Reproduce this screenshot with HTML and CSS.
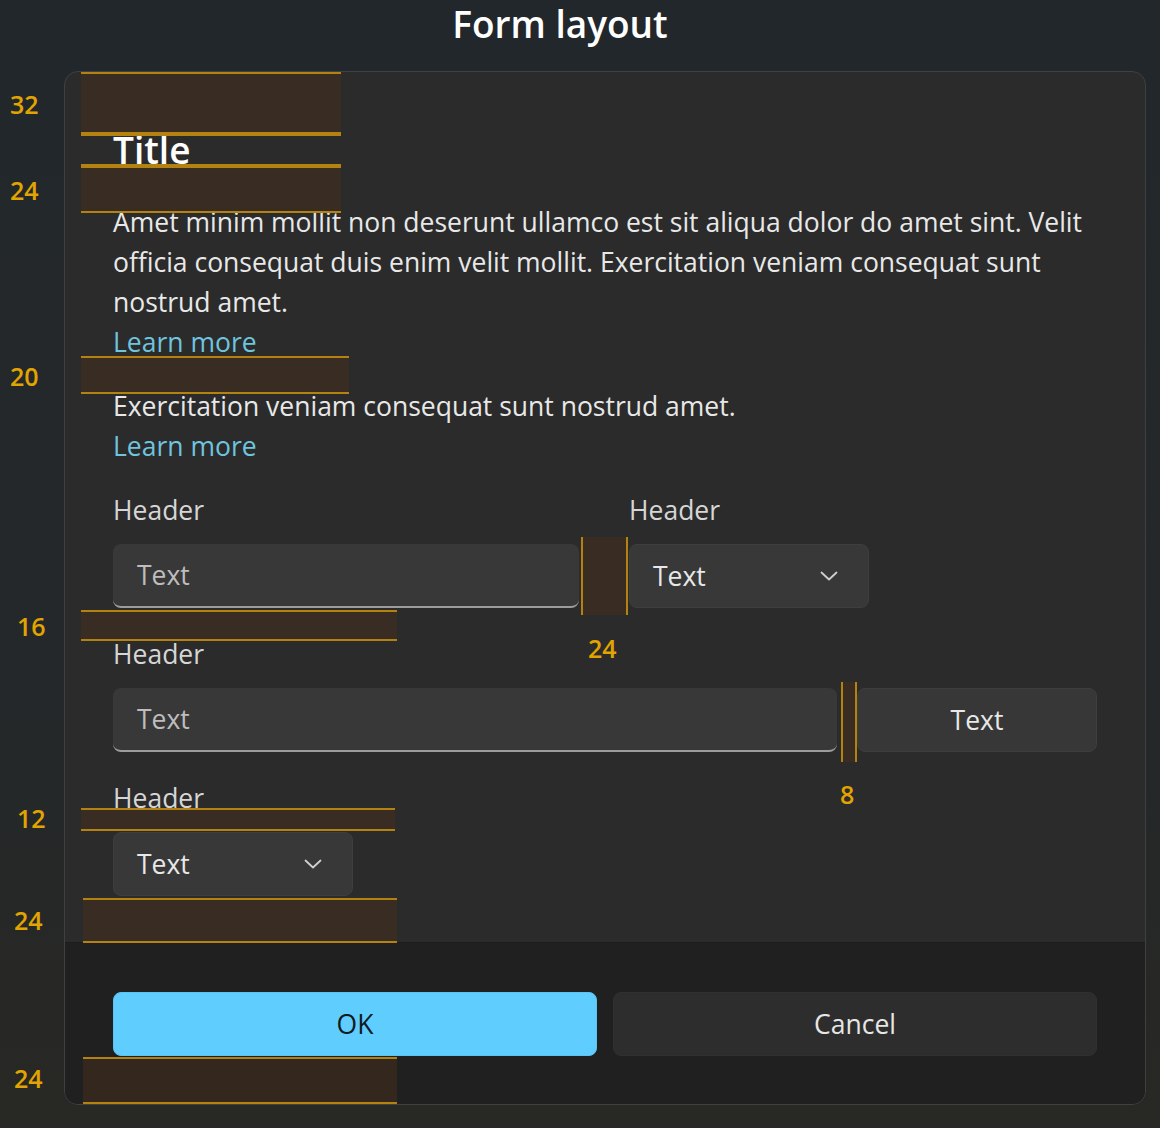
FILE: index.html
```html
<!DOCTYPE html>
<html lang="en">
<head>
<meta charset="utf-8">
<title>Form layout</title>
<link rel="stylesheet" href="styles.css">
</head>
<body>
<div class="page">
  <h1 class="page-title">Form layout</h1>
  <div class="dialog">
    <div class="dialog-body">
      <h2 class="dialog-title">Title</h2>
      <div class="para">
        <p>Amet minim mollit non deserunt ullamco est sit aliqua dolor do amet sint. Velit officia consequat duis enim velit mollit. Exercitation veniam consequat sunt nostrud amet.</p>
        <a class="link" href="#">Learn more</a>
      </div>
      <div class="para second">
        <p>Exercitation veniam consequat sunt nostrud amet.</p>
        <a class="link" href="#">Learn more</a>
      </div>
      <div class="row row-1">
        <div class="field field-wide">
          <div class="label">Header</div>
          <div class="textbox">Text</div>
        </div>
        <div class="field">
          <div class="label">Header</div>
          <div class="combo"><span>Text</span>
            <svg class="chev" width="18" height="10" viewBox="0 0 18 10"><path d="M1.5 1.5 L9 8.5 L16.5 1.5" fill="none" stroke="#cfcfcf" stroke-width="1.8" stroke-linecap="round" stroke-linejoin="round"/></svg>
          </div>
        </div>
      </div>
      <div class="field">
        <div class="label">Header</div>
        <div class="row row-2">
          <div class="textbox grow">Text</div>
          <div class="btn-secondary">Text</div>
        </div>
      </div>
      <div class="field last">
        <div class="label">Header</div>
        <div class="combo"><span>Text</span>
          <svg class="chev" width="18" height="10" viewBox="0 0 18 10"><path d="M1.5 1.5 L9 8.5 L16.5 1.5" fill="none" stroke="#cfcfcf" stroke-width="1.8" stroke-linecap="round" stroke-linejoin="round"/></svg>
        </div>
      </div>
    </div>
    <div class="dialog-footer">
      <button class="btn btn-primary">OK</button>
      <button class="btn btn-cancel">Cancel</button>
    </div>
  </div>

  <!-- redline overlays -->
  <div class="band band-h" style="left:81px;top:72px;width:260px;height:62px"></div>
  <div class="band band-lines" style="left:81px;top:134px;width:260px;height:32px"></div>
  <div class="band band-h" style="left:81px;top:166px;width:260px;height:47px"></div>
  <div class="band band-h" style="left:81px;top:356px;width:268px;height:38px"></div>
  <div class="band band-v" style="left:581px;top:537px;width:47px;height:78px"></div>
  <div class="band band-h" style="left:81px;top:610px;width:316px;height:31px"></div>
  <div class="band band-v" style="left:841px;top:682px;width:16px;height:80px"></div>
  <div class="band band-h" style="left:81px;top:808px;width:314px;height:23px"></div>
  <div class="band band-h" style="left:83px;top:898px;width:314px;height:45px"></div>
  <div class="band band-h" style="left:83px;top:1057px;width:314px;height:47px"></div>

  <span class="num" style="left:10px;top:88px">32</span>
  <span class="num" style="left:10px;top:174px">24</span>
  <span class="num" style="left:10px;top:360px">20</span>
  <span class="num" style="left:17px;top:610px">16</span>
  <span class="num" style="left:588px;top:632px">24</span>
  <span class="num" style="left:840px;top:778px">8</span>
  <span class="num" style="left:17px;top:802px">12</span>
  <span class="num" style="left:14px;top:904px">24</span>
  <span class="num" style="left:14px;top:1062px">24</span>
</div>
</body>
</html>
```

FILE: styles.css
```css
* { box-sizing: border-box; }
html, body { margin: 0; padding: 0; }
body {
  background: linear-gradient(180deg, #22272b 0%, #24282a 60%, #282824 100%);
  font-family: "Open Sans", "Noto Sans", sans-serif;
  color: #ffffff;
  height: 1128px;
  overflow: hidden;
}
.page {
  position: relative;
  width: 1160px;
  height: 1128px;
}
.page-title {
  margin: 0;
  height: 71px;
  padding-right: 40px;
  text-align: center;
  font-size: 37px;
  font-weight: 600;
  line-height: 48px;
  color: #ffffff;
}
.dialog {
  margin-left: 64px;
  width: 1082px;
  border: 1px solid #3f4042;
  border-radius: 14px;
  background: #2b2b2b;
  overflow: hidden;
}
.dialog-body {
  padding: 54px 48px 46px 48px;
}
.dialog-title {
  margin: 0;
  font-size: 37px;
  font-weight: 600;
  line-height: 48px;
  color: #ffffff;
}
.para {
  margin-top: 28px;
  font-size: 26.5px;
  line-height: 40px;
  color: #e8e8e8;
}
.para p { margin: 0; }
.para.second { margin-top: 24px; }
.link {
  color: #6fc4df;
  text-decoration: none;
}
.row { display: flex; }
.row-1 { gap: 50px; margin-top: 24px; }
.row-2 { gap: 20px; }
.field { display: flex; flex-direction: column; margin-top: 26px; }
.row-1 .field { margin-top: 0; }
.field-wide { width: 466px; }
.label {
  font-size: 26.5px;
  line-height: 40px;
  height: 40px;
  margin-bottom: 14px;
  color: #d6d6d6;
}
.textbox {
  height: 64px;
  background: #383838;
  border-radius: 8px;
  border-bottom: 2px solid #9c9c9c;
  padding: 0 24px;
  font-size: 26.5px;
  line-height: 62px;
  color: #bdbdbd;
}
.grow { flex: 1; }
.combo {
  width: 240px;
  height: 64px;
  background: #383838;
  border-radius: 8px;
  border: 1px solid #3e3e3e;
  padding: 0 23px;
  display: flex;
  align-items: center;
  justify-content: space-between;
  font-size: 26.5px;
  color: #e8e8e8;
}
.chev { margin-right: 7px; }
.btn-secondary {
  width: 240px;
  height: 64px;
  background: #373737;
  border-radius: 8px;
  border: 1px solid #3e3e3e;
  display: flex;
  align-items: center;
  justify-content: center;
  font-size: 26.5px;
  color: #e8e8e8;
}
.dialog-footer {
  background: #202020;
  border-top: 1px solid #1d1d1d;
  padding: 49px 48px 48px 48px;
  display: flex;
  gap: 16px;
}
.btn {
  flex: 1;
  height: 64px;
  border-radius: 8px;
  font-family: "Open Sans", "Noto Sans", sans-serif;
  font-size: 26.5px;
  display: flex;
  align-items: center;
  justify-content: center;
  padding: 0;
}
.btn-primary {
  background: #60cdff;
  border: 1px solid #5cc4f2;
  color: #0f1b22;
}
.btn-cancel {
  background: #2d2d2d;
  border: 1px solid #303030;
  color: #e6e6e6;
}
.band {
  position: absolute;
}
.band-h {
  background: rgba(70, 45, 30, 0.55);
  border-top: 2px solid #b48210;
  border-bottom: 2px solid #b48210;
}
.band-lines {
  border-top: 2px solid #b48210;
  border-bottom: 2px solid #b48210;
}
.band-v {
  background: rgba(70, 45, 30, 0.55);
  border-left: 2px solid #b48210;
  border-right: 2px solid #b48210;
}
.num {
  position: absolute;
  font-family: "Open Sans", "Noto Sans", sans-serif;
  font-size: 25px;
  font-weight: 600;
  line-height: 32px;
  color: #e2a400;
}
```
